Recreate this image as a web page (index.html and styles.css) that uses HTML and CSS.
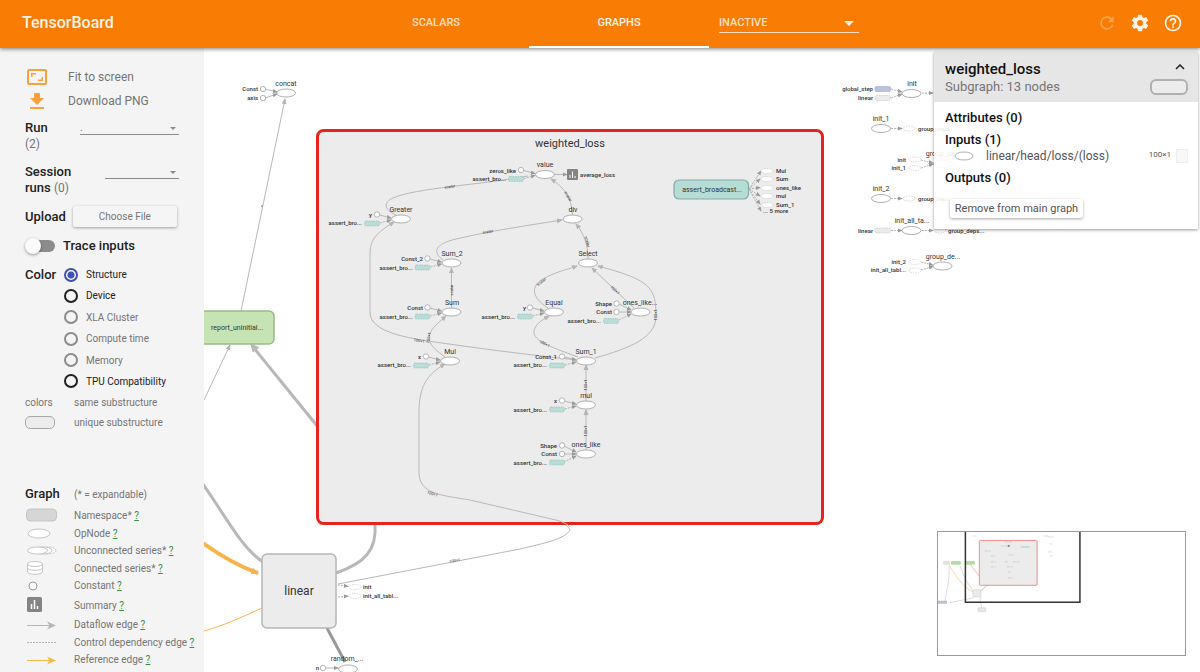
FILE: index.html
```html
<!DOCTYPE html>
<html lang="en">
<head>
<meta charset="utf-8">
<title>TensorBoard</title>
<link rel="stylesheet" href="styles.css">
</head>
<body>
<header class="topbar">
  <h1 class="brand">TensorBoard</h1>
  <nav class="nav">
    <a class="tab" href="#scalars">SCALARS</a>
    <a class="tab active" href="#graphs">GRAPHS</a>
    <div class="select inactive-select">
      <select aria-label="Inactive dashboards"><option>INACTIVE</option></select>
    </div>
  </nav>
  <div class="actions">
    <button class="icon-btn dim" aria-label="Reload"><svg viewBox="0 0 24 24"><path d="M17.65 6.35A8 8 0 1 0 19.73 14h-2.08A6 6 0 1 1 12 6c1.66 0 3.14.69 4.22 1.78L13 11h7V4z"/></svg></button>
    <button class="icon-btn" aria-label="Settings"><svg viewBox="0 0 24 24"><path d="M19.43 12.98c.04-.32.07-.64.07-.98s-.03-.66-.07-.98l2.11-1.65c.19-.15.24-.42.12-.64l-2-3.46c-.12-.22-.39-.3-.61-.22l-2.49 1c-.52-.4-1.08-.73-1.69-.98l-.38-2.65A.49.49 0 0 0 14 2h-4c-.25 0-.46.18-.49.42l-.38 2.65c-.61.25-1.17.59-1.69.98l-2.49-1c-.23-.09-.49 0-.61.22l-2 3.46c-.13.22-.07.49.12.64l2.11 1.65c-.04.32-.07.65-.07.98s.03.66.07.98l-2.11 1.65c-.19.15-.24.42-.12.64l2 3.46c.12.22.39.3.61.22l2.49-1c.52.4 1.08.73 1.69.98l.38 2.65c.03.24.24.42.49.42h4c.25 0 .46-.18.49-.42l.38-2.65c.61-.25 1.17-.59 1.69-.98l2.49 1c.23.09.49 0 .61-.22l2-3.46c.12-.22.07-.49-.12-.64zM12 15.5a3.5 3.5 0 1 1 0-7 3.5 3.5 0 0 1 0 7z"/></svg></button>
    <button class="icon-btn" aria-label="Help"><svg viewBox="0 0 24 24"><path d="M11 18h2v-2h-2zm1-16a10 10 0 1 0 0 20 10 10 0 0 0 0-20zm0 18a8 8 0 1 1 0-16 8 8 0 0 1 0 16zm0-14a4 4 0 0 0-4 4h2a2 2 0 1 1 4 0c0 2-3 1.75-3 5h2c0-2.25 3-2.5 3-5a4 4 0 0 0-4-4z"/></svg></button>
  </div>
</header>
<div class="workspace">
  <aside class="sidebar">
    <button class="tool"><svg viewBox="0 0 20 18"><rect x="1" y="2" width="18" height="14" rx="1" fill="none" stroke="#f7a23c" stroke-width="2"/><path d="M4 5h5v1.500H5.500V9H4zM16 13h-5v-1.500h3.500V9H16z"/></svg>Fit to screen</button>
    <button class="tool"><svg viewBox="0 0 20 18"><path d="M7 1h6v5h4l-7 7-7-7h4zM3 15h14v2H3z"/></svg>Download PNG</button>
    <div class="field run">
      <label for="run">Run<br><span>(2)</span></label>
      <div class="select wide"><select id="run"><option>.</option></select></div>
    </div>
    <div class="field session">
      <label for="session">Session<br>runs <span>(0)</span></label>
      <div class="select narrow"><select id="session"><option></option></select></div>
    </div>
    <div class="upload"><span class="label">Upload</span><button class="file-btn">Choose File</button></div>
    <label class="trace"><input type="checkbox" class="toggle">Trace inputs</label>
    <fieldset class="color">
      <legend class="label">Color</legend>
      <div class="radios">
        <label><input type="radio" name="color" checked>Structure</label>
        <label><input type="radio" name="color">Device</label>
        <label class="off"><input type="radio" name="color" disabled>XLA Cluster</label>
        <label class="off"><input type="radio" name="color" disabled>Compute time</label>
        <label class="off"><input type="radio" name="color" disabled>Memory</label>
        <label><input type="radio" name="color">TPU Compatibility</label>
      </div>
    </fieldset>
    <div class="key"><span>colors</span><span>same substructure</span></div>
    <div class="key"><span><i class="pill"></i></span><span>unique substructure</span></div>
    <div class="key graph-head"><span class="label">Graph</span><span>(* = expandable)</span></div>
    <ul class="legend">
      <li><svg viewBox="0 0 32 16"><rect x="1.500" y="1" width="30" height="12" rx="4" fill="#d6d6d6" stroke="#c4c4c4"/></svg><span>Namespace* <a href="#ns">?</a></span></li>
      <li><svg viewBox="0 0 32 16"><ellipse cx="14" cy="8.500" rx="11" ry="4.500" fill="#fff" stroke="#c4c4c4"/></svg><span>OpNode <a href="#op">?</a></span></li>
      <li><svg viewBox="0 0 32 16" fill="#fff" stroke="#c4c4c4"><ellipse cx="22" cy="7.500" rx="9" ry="3.500" stroke-dasharray="2 1"/><ellipse cx="18" cy="7.500" rx="9" ry="3.500"/><ellipse cx="12.500" cy="7.500" rx="10" ry="3.500"/></svg><span>Unconnected series* <a href="#us">?</a></span></li>
      <li><svg viewBox="0 0 32 16" fill="#fff" stroke="#c4c4c4"><path d="M2.500 4v8c0 3 15 3 15 0V4"/><path d="M2.500 8c0 3 15 3 15 0" fill="none"/><ellipse cx="10" cy="4" rx="7.500" ry="2.500"/></svg><span>Connected series* <a href="#cs">?</a></span></li>
      <li><svg viewBox="0 0 32 16"><circle cx="8" cy="8" r="4" fill="#fff" stroke="#999"/></svg><span>Constant <a href="#c">?</a></span></li>
      <li class="tall"><svg viewBox="0 0 32 16"><rect x="2" y="0" width="15" height="15" rx="1.500" fill="#848484"/><path d="M6.500 7v5M9.500 3v9M12.500 9v3" stroke="#fff" stroke-width="1.500"/></svg><span>Summary <a href="#s">?</a></span></li>
      <li><svg viewBox="0 0 32 16"><path d="M2 8.500h24" stroke="#b5b5b5"/><path d="M31 8.500l-9-4 2.500 4-2.500 4z" fill="#b5b5b5"/></svg><span>Dataflow edge <a href="#d">?</a></span></li>
      <li><svg viewBox="0 0 32 16"><path d="M2 8.500h29" stroke="#b5b5b5" stroke-dasharray="2 1"/></svg><span>Control dependency edge <a href="#cd">?</a></span></li>
      <li><svg viewBox="0 0 32 16"><path d="M2 8.500h24" stroke="#f5b748"/><path d="M31 8.500l-9-4 2.500 4-2.500 4z" fill="#f5b748"/></svg><span>Reference edge <a href="#r">?</a></span></li>
    </ul>
  </aside>
  <main class="canvas">
    <svg class="graph" role="img" aria-label="Computation graph">
      <defs>
        <marker id="arrow" viewBox="0 0 6 6" refX="5" refY="3" markerWidth="6" markerHeight="6" markerUnits="userSpaceOnUse" orient="auto"><path d="M0 .5L6 3 0 5.500z" fill="#b5b5b5"/></marker>
        <marker id="arrow-dark" viewBox="0 0 6 6" refX="5" refY="3" markerWidth="5" markerHeight="5" markerUnits="userSpaceOnUse" orient="auto"><path d="M0 .5L6 3 0 5.500z" fill="#9a9a9a"/></marker>
        <marker id="arrow-ref" viewBox="0 0 6 6" refX="5" refY="3" markerWidth="8" markerHeight="8" markerUnits="userSpaceOnUse" orient="auto"><path d="M0 .5L6 3 0 5.500z" fill="#f5b54b"/></marker>
        <g id="op"><ellipse rx="9.500" ry="4" fill="#fff" stroke="#b0b0b0"/></g>
        <g id="ghost"><ellipse rx="6" ry="2.500" fill="#fff" stroke="#c9c9c9" stroke-width=".7" stroke-dasharray="1.500 1"/></g>
        <g id="const"><circle r="2.700" fill="#fff" stroke="#a5a5a5" stroke-width=".8"/></g>
        <g id="teal"><rect x="-7.500" y="-2.500" width="15" height="5" rx="1.500" fill="#b9dcd7" stroke="#8fc0ba" stroke-width=".6" stroke-dasharray="1.500 1"/></g>
        <g id="in-const"><path class="thin" d="M-21.500 -4L-10 -1" marker-end="url(#arrow-dark)"/><use href="#const" x="-24" y="-4.500"/></g>
        <g id="in-teal"><path class="dash" d="M-21 4L-10 1" marker-end="url(#arrow-dark)"/><use href="#teal" x="-29" y="4.500"/></g>
        <g id="in-both"><use href="#in-const"/><use href="#in-teal"/></g>
      </defs>
      <g transform="translate(-204 -48)">
        <g class="edges">
          <path d="M241 311L285 99" marker-end="url(#arrow)"/>
          <path d="M204 400L230 345" marker-end="url(#arrow)"/>
          <path class="thick" d="M318 427L253 347"/><path d="M251 344l7.500 3.500-5.500 4.500z" class="head"/>
          <path class="thick" d="M200 480C224 513 241 548 263 562"/>
          <path class="thick" d="M375 524C377 550 365 563 336 573"/>
          <path d="M338 584L520 549C545 543 565 539 570 530C568 526 565 524 558 521"/>
          <path class="ref thick" d="M200 541C222 557 238 566 258 573" marker-end="url(#arrow-ref)"/>
          <path class="ref" d="M204 631C225 625 240 618 262 608"/>
          <path class="thick dark" d="M327 628L345 662"/>
        </g>
        <rect x="190" y="311" width="84" height="33" rx="5" fill="#c5e3b3" stroke="#98ba8a" stroke-width="1.500"/>
        <text class="small" x="237" y="330" text-anchor="middle">report_uninitial...</text>
        <rect x="262" y="554" width="74" height="74" rx="5" fill="#ececec" stroke="#b5b5b5" stroke-width="1.500"/>
        <text class="title" x="299" y="595" text-anchor="middle">linear</text>

        <use href="#op" x="286" y="93"/><path class="thin" d="M265 89L277 92" marker-end="url(#arrow-dark)"/><path class="thin" d="M265 98L277 94" marker-end="url(#arrow-dark)"/>
        <use href="#const" x="263" y="89"/><use href="#const" x="263" y="98"/>
        <text class="name" x="286" y="86">concat</text><text class="tiny end" x="258" y="91">Const</text><text class="tiny end" x="258" y="100">axis</text>
        <circle cx="262" cy="206" r="1" fill="#999"/>

        <path class="dash" d="M338 585L348 586.500" marker-end="url(#arrow-dark)"/><path class="dash" d="M338 597L348 596" marker-end="url(#arrow-dark)"/>
        <use href="#ghost" x="355" y="587"/><use href="#ghost" x="355" y="596"/>
        <text class="tiny" x="363" y="589">init</text><text class="tiny" x="363" y="598">init_all_tabl...</text>
        <use href="#const" x="323" y="668"/><path class="thin" d="M326 668h12" marker-end="url(#arrow-dark)"/><use href="#op" x="348" y="669"/>
        <text class="name" x="347" y="661">random_...</text><text class="tiny end" x="319" y="670">n</text>

        <rect x="317.500" y="130.500" width="505" height="393" rx="6" fill="#ececec" stroke="#e5231f" stroke-width="3"/>
        <text class="title scope" x="570" y="147" text-anchor="middle">weighted_loss</text>

        <g class="edges">
          <path d="M570 527C568 524 562 522 558 520.500L470 500C440 495 419 494 419 472V412C419 385 428 374 445 364" marker-end="url(#arrow)"/>
          <path d="M445 357C428 345 424 337 436 325L446 316" marker-end="url(#arrow)"/>
          <path d="M451.500 308V268" marker-end="url(#arrow)"/>
          <path d="M443 260C432 252 435 244 456 239C490 231 530 225 562 220" marker-end="url(#arrow)"/>
          <path d="M396 215C384 210 383 202 393 198C415 188 480 185 528 176"/>
          <path d="M577 360C540 356 490 350 442 343C405 338 370 332 370 312V254C370 240 376 233 394 222" marker-end="url(#arrow)"/>
          <path d="M572.500 215C572 198 564 187 551 179" marker-end="url(#arrow)"/>
          <path d="M588 259C588 244 584 234 576 224" marker-end="url(#arrow)"/>
          <path d="M548 308C532 298 530 286 543 279C555 272 566 270 577 266" marker-end="url(#arrow)"/>
          <path d="M634 308L592 268" marker-end="url(#arrow)"/>
          <path d="M595 358C630 348 656 338 656 316C656 287 650 280 598 266" marker-end="url(#arrow)"/>
          <path d="M578 357C548 346 534 341 534 332C534 325 542 320 549 316" marker-end="url(#arrow)"/>
          <path d="M586 401V366M586 450V410"/>
          <path d="M586 370V365" marker-end="url(#arrow)"/><path d="M586 414V410" marker-end="url(#arrow)"/>
          <path d="M554 174.500h13" marker-end="url(#arrow-dark)"/>
        </g>
        <g class="marks">
          <text transform="translate(450 188) rotate(-9)">scalar</text><text transform="translate(488 233) rotate(-9)">scalar</text>
          <text transform="translate(453 290) rotate(-90)">scalar</text><text transform="translate(430 338) rotate(-80)">100×1</text>
          <text transform="translate(419 342) rotate(8)">100×1</text><text transform="translate(567 197) rotate(60)">scalar</text>
          <text transform="translate(586 242) rotate(75)">scalar</text><text transform="translate(542 283) rotate(-38)">scalar</text>
          <text transform="translate(614 291) rotate(44)">100×1</text><text transform="translate(657 315) rotate(-90)">100×1</text>
          <text transform="translate(544 345) rotate(25)">100×1</text><text transform="translate(587 385) rotate(-90)">100×1</text>
          <text transform="translate(587 431) rotate(-90)">100×1</text><text transform="translate(432 495) rotate(18)">100×1</text>
          <text transform="translate(455 562) rotate(-10)">100×1</text>
        </g>

        <use href="#in-both" x="545" y="174.500"/><use href="#op" x="545" y="174.500"/>
        <text class="name" x="545" y="167">value</text><text class="tiny end" x="516" y="173">zeros_like</text><text class="tiny end" x="506" y="181">assert_bro...</text>
        <rect x="567" y="169" width="11" height="11" rx="1" fill="#848484"/><path d="M570 175v3M572.500 171.500v6.500M575 176v2" stroke="#fff"/><text class="tiny" x="580" y="177">average_loss</text>

        <use href="#in-both" x="401" y="219"/><use href="#op" x="401" y="219"/>
        <text class="name" x="401" y="212">Greater</text><text class="tiny end" x="372" y="217">y</text><text class="tiny end" x="362" y="225">assert_bro...</text>

        <use href="#op" x="572.500" y="219"/><text class="name" x="573" y="212">div</text>
        <use href="#op" x="588" y="263"/><text class="name" x="588" y="256">Select</text>

        <use href="#in-both" x="451.500" y="263"/><use href="#op" x="451.500" y="263"/>
        <text class="name" x="452" y="256">Sum_2</text><text class="tiny end" x="423" y="261">Const_2</text><text class="tiny end" x="413" y="270">assert_bro...</text>
        <use href="#in-both" x="451.500" y="312"/><use href="#op" x="451.500" y="312"/>
        <text class="name" x="452" y="305">Sum</text><text class="tiny end" x="423" y="310">Const</text><text class="tiny end" x="413" y="319">assert_bro...</text>
        <use href="#in-both" x="450" y="361"/><use href="#op" x="450" y="361"/>
        <text class="name" x="450" y="354">Mul</text><text class="tiny end" x="421" y="359">x</text><text class="tiny end" x="411" y="367">assert_bro...</text>

        <use href="#in-both" x="554" y="312"/><use href="#op" x="554" y="312"/>
        <text class="name" x="554" y="305">Equal</text><text class="tiny end" x="526" y="310">y</text><text class="tiny end" x="515" y="319">assert_bro...</text>

        <path class="thin" d="M619 304L631 310" marker-end="url(#arrow-dark)"/><path class="thin" d="M619 312h12" marker-end="url(#arrow-dark)"/><path class="dash" d="M619 320L631 314" marker-end="url(#arrow-dark)"/>
        <use href="#const" x="616.500" y="303.500"/><use href="#const" x="616.500" y="312"/><use href="#teal" x="611" y="321"/><use href="#op" x="640.500" y="312"/>
        <text class="name" x="640" y="305">ones_like...</text><text class="tiny end" x="612" y="306">Shape</text><text class="tiny end" x="612" y="314">Const</text><text class="tiny end" x="601" y="323">assert_bro...</text>

        <use href="#in-both" x="586" y="361"/><use href="#op" x="586" y="361"/>
        <text class="name" x="586" y="354">Sum_1</text><text class="tiny end" x="557" y="359">Const_1</text><text class="tiny end" x="547" y="367">assert_bro...</text>
        <use href="#in-both" x="586" y="405"/><use href="#op" x="586" y="405"/>
        <text class="name" x="586" y="398">mul</text><text class="tiny end" x="557" y="403">x</text><text class="tiny end" x="547" y="412">assert_bro...</text>
        <path class="thin" d="M564 446L576 452" marker-end="url(#arrow-dark)"/><path class="thin" d="M564 454h12" marker-end="url(#arrow-dark)"/><path class="dash" d="M564 462L576 456" marker-end="url(#arrow-dark)"/>
        <use href="#const" x="562" y="445.500"/><use href="#const" x="562" y="454"/><use href="#teal" x="557" y="462.500"/><use href="#op" x="586" y="454"/>
        <text class="name" x="586" y="447">ones_like</text><text class="tiny end" x="557" y="448">Shape</text><text class="tiny end" x="557" y="456">Const</text><text class="tiny end" x="547" y="465">assert_bro...</text>

        <g class="dash"><path d="M749 189L761 171" marker-end="url(#arrow-dark)"/><path d="M749 189L760 179" marker-end="url(#arrow-dark)"/><path d="M749 189L760 187.500" marker-end="url(#arrow-dark)"/><path d="M749 189L760 196" marker-end="url(#arrow-dark)"/><path d="M749 189L760 204" marker-end="url(#arrow-dark)"/><path d="M749 189L761 211" marker-end="url(#arrow-dark)"/></g>
        <rect x="674" y="180" width="74.500" height="19" rx="5" fill="#b5ddd6" stroke="#84aaa6" stroke-width="1.200"/>
        <text class="small" x="712" y="192" text-anchor="middle">assert_broadcast...</text>
        <use href="#ghost" x="767" y="171"/><use href="#ghost" x="767" y="179"/><use href="#ghost" x="767" y="188"/><use href="#ghost" x="767" y="196"/><use href="#ghost" x="767" y="205"/>
        <text class="tiny" x="776" y="173">Mul</text><text class="tiny" x="776" y="181">Sum</text><text class="tiny" x="776" y="190">ones_like</text><text class="tiny" x="776" y="198">mul</text><text class="tiny" x="776" y="207">Sum_1</text><text class="tiny" x="763" y="213">... 5 more</text>

        <g class="dash">
          <path d="M891 89L902 92" marker-end="url(#arrow-dark)"/><path d="M891 98L902 94" marker-end="url(#arrow-dark)"/><path d="M922 93h11" marker-end="url(#arrow-dark)"/>
          <path d="M891 128.500h11" marker-end="url(#arrow-dark)"/><path d="M891 198.500h11" marker-end="url(#arrow-dark)"/>
          <path d="M921 160L933 163" marker-end="url(#arrow-dark)"/><path d="M921 168L933 164" marker-end="url(#arrow-dark)"/>
          <path d="M891 230.500h11" marker-end="url(#arrow-dark)"/><path d="M922 230.500h11" marker-end="url(#arrow-dark)"/>
          <path d="M921 262L933 265" marker-end="url(#arrow-dark)"/><path d="M921 270L933 266.500" marker-end="url(#arrow-dark)"/>
        </g>
        <rect x="875" y="86.500" width="15.500" height="5" rx="1.500" fill="#bcc3de" stroke="#9fa8c8" stroke-width=".6"/>
        <g fill="#ececec" stroke="#bdbdbd" stroke-width=".6" stroke-dasharray="1.500 1"><rect x="875" y="95.500" width="15.500" height="5" rx="1.500"/><rect x="875" y="228" width="15.500" height="5" rx="1.500"/></g>
        <use href="#op" x="911.500" y="93.500"/><use href="#op" x="881" y="128.500"/><use href="#op" x="943" y="164"/><use href="#op" x="881" y="198.500"/><use href="#op" x="911.500" y="230.500"/><use href="#op" x="942.500" y="266"/>
        <use href="#ghost" x="909" y="128.500"/><use href="#ghost" x="915" y="159.500"/><use href="#ghost" x="915" y="168"/><use href="#ghost" x="909" y="198.500"/><use href="#ghost" x="940" y="230.500"/><use href="#ghost" x="915" y="262"/><use href="#ghost" x="915" y="270.500"/>
        <text class="name" x="912" y="86">init</text><text class="tiny end" x="873" y="91">global_step</text><text class="tiny end" x="873" y="100">linear</text>
        <text class="name" x="881" y="121">init_1</text><text class="tiny" x="918" y="131">group_deps...</text>
        <text class="name" x="943" y="156">group_de...</text><text class="tiny end" x="906" y="162">init</text><text class="tiny end" x="906" y="170">init_1</text>
        <text class="name" x="881" y="191">init_2</text><text class="tiny" x="918" y="201">group_deps...</text>
        <text class="name" x="912" y="223">init_all_ta...</text><text class="tiny end" x="873" y="233">linear</text><text class="tiny" x="948" y="233">group_deps...</text>
        <text class="name" x="943" y="259">group_de...</text><text class="tiny end" x="906" y="264">init_2</text><text class="tiny end" x="906" y="272">init_all_tabl...</text>
      </g>
    </svg>

    <section class="info">
      <div class="info-head">
        <div><h2>weighted_loss</h2><p>Subgraph: 13 nodes</p></div>
        <div class="info-side">
          <button class="collapse" aria-label="Collapse"><svg viewBox="0 0 10 6"><path d="M1 5l4-4 4 4" fill="none" stroke="#222" stroke-width="1.500"/></svg></button>
          <i class="pill big"></i>
        </div>
      </div>
      <div class="info-body">
        <h3>Attributes (0)</h3>
        <h3>Inputs (1)</h3>
        <div class="input-row">
          <svg viewBox="0 0 20 10"><ellipse cx="10" cy="5" rx="9" ry="4" fill="#fff" stroke="#b0b0b0"/></svg>
          <a href="#loss">linear/head/loss/(loss)</a><span class="shape">100×1</span><i class="stub"></i>
        </div>
        <h3>Outputs (0)</h3>
        <button class="remove">Remove from main graph</button>
      </div>
    </section>

    <div class="minimap">
      <svg viewBox="0 0 248 124">
        <g fill="none" stroke="#ddd"><path d="M11 34C12 50 8 60 7 70M22 34C28 50 34 60 44 66M12 71L36 66M42 66L44 77"/><path d="M11 33C20 48 28 58 36 60" stroke="#f3d9a6"/><path d="M32 32L42 45M43 59L50 53" stroke="#f0b8a8"/></g>
        <g fill="#b5dba8"><rect x="13" y="29" width="10" height="4" rx="1"/><rect x="28" y="29" width="9" height="4" rx="1"/></g>
        <rect x="5" y="29" width="7" height="4" rx="1" fill="#e2e2e2"/><rect x="0" y="69" width="9" height="3" fill="#b9bfd4"/>
        <rect x="35" y="58" width="8" height="7" rx="1" fill="#ececec" stroke="#c9c9c9" stroke-width=".6"/>
        <rect x="40" y="76" width="8" height="4" rx="1" fill="#e6e6e6" stroke="#ccc" stroke-width=".5"/>
        <rect x="41.500" y="8.500" width="58" height="45" rx="1" fill="#ececec" stroke="#f08d8d"/>
        <rect x="83" y="14" width="9" height="2" fill="#bfe0db"/><rect x="70" y="13" width="2" height="2" fill="#888"/>
        <path d="M67 10h8M63 14h7M47 19h6M53 24h5M71 23h5M53 30h5M67 30h4M75 30h7M53 35h5M69 35h6M70 40h4M70 46h5" stroke="#cfcfcf" stroke-dasharray="3 1"/>
        <path d="M106 4h5M110 5h6M112 12h3M110 20h4M112 24h3M35 4h3" stroke="#dcdcdc"/>
        <path d="M27.500 0V70.500H142.500V0" fill="none" stroke="#333" stroke-width="1.500"/>
      </svg>
    </div>
  </main>
</div>
</body>
</html>
```
FILE: styles.css
```css
* { box-sizing: border-box; }
body { margin: 0; height: 100vh; display: flex; flex-direction: column; overflow: hidden; font-family: Roboto, "Liberation Sans", sans-serif; color: #212121; background: #fff; }
button, select { font: inherit; color: inherit; }
button { border: 0; background: none; padding: 0; cursor: pointer; }
h1, h2, h3, p, ul { margin: 0; padding: 0; font-weight: 400; }

.topbar { height: 48px; flex: none; display: flex; align-items: stretch; background: #f97c05; color: #fff; box-shadow: 0 1px 4px rgba(0,0,0,.5); position: relative; z-index: 2; }
.brand { flex: 1 1 0; padding-left: 22px; font-size: 16px; font-weight: 500; line-height: 45px; color: #fff3e6; }
.nav { display: flex; gap: 3px; }
.tab { width: 180px; text-align: center; font-size: 11px; font-weight: 500; line-height: 45px; color: #ffdfc0; text-decoration: none; border-bottom: 2px solid transparent; }
.tab.active { color: #fff3e6; border-color: #fff; }
.actions { flex: 1 1 0; display: flex; justify-content: flex-end; align-items: center; gap: 13px; padding: 0 17px 3px 0; }
.icon-btn { width: 20px; height: 20px; }
.icon-btn svg { display: block; width: 20px; fill: #fff3e6; }
.icon-btn.dim { opacity: .35; }

.select { position: relative; border-bottom: 1px solid #8a8a8a; }
.select::after { content: ""; position: absolute; right: 3px; top: 50%; border: 3px solid transparent; border-top-color: #8a8a8a; border-bottom: 0; pointer-events: none; }
.select select { appearance: none; width: 100%; height: 100%; border: 0; background: transparent; padding: 0; display: block; }
.inactive-select { width: 140px; height: 20px; margin: 13px 0 0 7px; border-color: #ffdfc0; font-size: 11px; font-weight: 500; color: #ffdfc0; }
.inactive-select::after { right: 5px; top: 8px; border-width: 5px 5px 0; border-top-color: #fff3e6; }

.workspace { flex: 1; min-height: 0; display: flex; }
.sidebar { width: 204px; flex: none; background: #f4f4f4; padding: 17px 0 0 25px; overflow: hidden; font-size: 11px; color: #757575; }
.tool { display: flex; align-items: center; gap: 21px; height: 24px; width: 100%; text-align: left; font-size: 12px; }
.tool svg { width: 20px; height: 18px; margin-left: 2px; fill: #f7a23c; }
.label, .field label, .trace { font-size: 13px; font-weight: 500; color: #212121; line-height: 16px; }
.field { display: flex; justify-content: space-between; padding-right: 25px; }
.field label { width: 54px; }
.field label span { font-size: 12px; font-weight: 400; line-height: 14px; color: #757575; }
.run { margin-top: 7px; }
.session { margin-top: 12px; }
.select.wide { width: 99px; height: 15px; }
.select.narrow { width: 74px; height: 15px; }
.upload { display: flex; align-items: center; gap: 7px; margin-top: 10px; }
.file-btn { width: 104px; height: 21px; border-radius: 2px; background: #f5f5f5; box-shadow: 0 1px 3px rgba(0,0,0,.35); font-size: 10px; }
.trace { display: flex; align-items: center; gap: 8px; margin-top: 10px; height: 18px; }
.toggle { appearance: none; position: relative; width: 30px; height: 12px; margin: 0; border-radius: 6px; background: linear-gradient(#8c8c8c, #8c8c8c) content-box; padding-left: 4px; }
.toggle::before { content: ""; position: absolute; left: 0; top: -2px; width: 16px; height: 16px; border-radius: 50%; background: #fafafa; box-shadow: 0 1px 3px rgba(0,0,0,.4); }
.color { display: flex; border: 0; margin: 9px 0 0; padding: 0; }
.color .label { float: left; width: 39px; padding: 3px 0 0; }
.radios { display: flex; flex-direction: column; justify-content: space-between; min-height: 128px; color: #212121; font-size: 10px; }
.radios label { display: flex; align-items: center; gap: 8px; height: 21px; }
.radios .off { color: #757575; }
.radios input { appearance: none; width: 14px; height: 14px; margin: 0; border: 2px solid #212121; border-radius: 50%; }
.radios input:checked { border-color: #3f51b5; background: radial-gradient(circle, #3f51b5 3px, transparent 4px); }
.radios input:disabled { border-color: #8c8c8c; }
.key { display: grid; grid-template-columns: 49px 1fr; align-items: center; height: 20px; font-size: 10px; }
.pill { display: block; width: 30px; height: 13px; border: 1px solid #a8a8a8; border-radius: 5px; background: #ececec; }
.graph-head { margin-top: 52px; }
.legend { list-style: none; display: flex; flex-direction: column; justify-content: space-between; min-height: 161px; margin-top: 3px; font-size: 10px; }
.legend li { height: 17px; display: grid; grid-template-columns: 49px 1fr; align-items: center; white-space: nowrap; }
.legend .tall { height: 21px; }
.legend svg { width: 32px; height: 16px; }
.legend a { color: #388e3c; }

.canvas { flex: 1; min-width: 0; position: relative; overflow: hidden; background: #fff; }
.graph { display: block; width: 100%; height: 100%; }
.graph text { fill: #333; }
.edges path, .thin { fill: none; stroke: #b8b8b8; stroke-width: 1; }
.edges .thick { stroke-width: 3; }
.edges .dark { stroke: #999; }
.edges .ref { stroke: #f5b54b; }
.edges .ref.thick { stroke-width: 4; }
.edges .head { fill: #b8b8b8; }
.dash { fill: none; stroke: #b5b5b5; stroke-width: 1; stroke-dasharray: 2 1; }
.title { font-size: 12px; }
.scope { font-size: 11px; }
.name { font-size: 7px; text-anchor: middle; }
.small { font-size: 7px; }
.tiny { font-size: 6px; font-weight: 500; }
.end { text-anchor: end; }
.marks { font-size: 4px; text-anchor: middle; }

.info { position: absolute; top: 4px; right: 2px; width: 264px; background: rgba(255,255,255,.9); box-shadow: 0 1px 3px rgba(0,0,0,.4); }
.info-head { display: flex; justify-content: space-between; background: #e6e6e6; padding: 8px 10px 6px 11px; }
.info h2 { font-size: 15px; font-weight: 500; line-height: 18px; color: #111; }
.info p { font-size: 13px; line-height: 18px; color: #757575; }
.info-side { display: flex; flex-direction: column; align-items: flex-end; gap: 9px; padding-top: 4px; }
.collapse { width: 10px; height: 6px; margin-right: 3px; }
.collapse svg { display: block; width: 10px; }
.pill.big { width: 38px; height: 16px; border: 2px solid #b0b0b0; border-radius: 6px; }
.info-body { padding: 5px 10px 11px 11px; }
.info h3 { font-size: 13px; font-weight: 500; line-height: 22px; color: #111; }
.input-row { display: flex; align-items: center; height: 16px; margin-top: -3px; padding-left: 9px; font-size: 12px; }
.input-row svg { width: 20px; margin-right: 12px; }
.input-row a { flex: 1; color: #555; text-decoration: none; }
.shape { font-size: 8px; color: #555; padding-bottom: 4px; }
.stub { width: 12px; height: 14px; margin-left: 5px; border: 1px solid #eee; background: #f8f8f8; }
.input-row + h3 { margin-top: 3px; }
.remove { margin: 10px 0 0 5px; width: 133px; height: 19px; font-size: 11px; color: #555; background: #fff; border-radius: 2px; box-shadow: 0 1px 3px rgba(0,0,0,.35); }

.minimap { position: absolute; right: 14px; bottom: 16px; width: 249px; border: 1px solid #999; background: #fff; }
.minimap svg { display: block; width: 100%; }
```
